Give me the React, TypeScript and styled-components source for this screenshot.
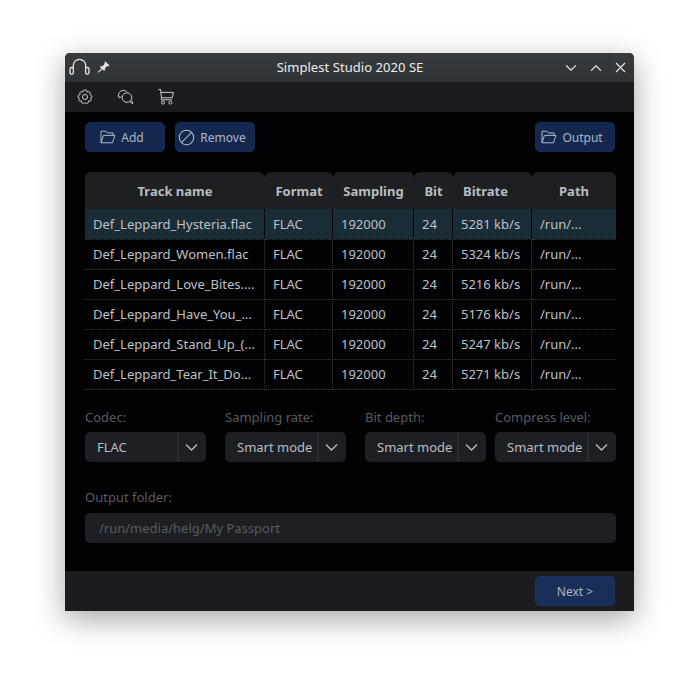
import React from "react";
import styled, { createGlobalStyle } from "styled-components";

const Global = createGlobalStyle`
  html, body { margin: 0; padding: 0; background: #fff; }
  body { font-family: "Noto Sans", "Open Sans", sans-serif; font-size: 13px; }
  * { box-sizing: border-box; }
`;

const Page = styled.div`
  width: 699px;
  height: 688px;
  padding: 53px 65px 0;
  overflow: hidden;
`;

const Window = styled.div`
  width: 569px;
  height: 558px;
  display: flex;
  flex-direction: column;
  background: #020204;
  border-radius: 5px 5px 0 0;
  box-shadow: 0 8px 30px rgba(0, 0, 0, 0.36);
  overflow: hidden;
`;

const TitleBar = styled.div`
  height: 29px;
  flex: none;
  display: flex;
  align-items: center;
  position: relative;
  padding: 0 8px 0 4px;
  background: linear-gradient(#383c3f, #2e3235);
  color: #eceded;
`;

const TitleText = styled.div`
  position: absolute;
  left: 0;
  right: 0;
  text-align: center;
  font-size: 13px;
  line-height: 29px;
  letter-spacing: 0.05px;
  margin-left: 1px;
`;

const TitleLeft = styled.div`
  display: flex;
  align-items: center;
  gap: 7px;
  padding-bottom: 2px;
`;

const TitleRight = styled.div`
  margin-left: auto;
  display: flex;
  align-items: center;
  gap: 13px;
`;

const ToolBar = styled.div`
  height: 30px;
  flex: none;
  display: flex;
  align-items: center;
  gap: 24px;
  padding-left: 12px;
  background: #1a1c1f;
  color: #c8cacd;
`;

const Content = styled.div`
  flex: 1;
  display: flex;
  flex-direction: column;
  padding: 10px 18px 0 20px;
`;

const ButtonRow = styled.div`
  display: flex;
  gap: 10px;
  height: 30px;
  padding-right: 1px;
`;

const BlueButton = styled.div<{ $push?: boolean }>`
  width: 80px;
  height: 30px;
  display: flex;
  align-items: center;
  justify-content: center;
  gap: 5px;
  padding-right: 6px;
  border-radius: 5px;
  background: #14284f;
  border: 1px solid #182c54;
  color: #aeb6c4;
  font-size: 12px;
  ${(p) => (p.$push ? "margin-left: auto;" : "")}
`;

const Table = styled.div`
  margin-top: 20px;
  width: 531px;
  display: grid;
  grid-template-columns: 180px 68px 81px 39px 79px 84px;
  grid-auto-rows: 30px;
`;

const HeaderCell = styled.div<{ $start?: boolean }>`
  height: 37px;
  margin-bottom: -7px;
  display: flex;
  align-items: center;
  justify-content: ${(p) => (p.$start ? "flex-start" : "center")};
  padding-left: ${(p) => (p.$start ? "10px" : "0")};
  background: #1d1f23;
  border-radius: 6px 6px 0 0;
  color: #b9bcc1;
  font-weight: 700;
  font-size: 13px;
`;

const HeaderRow = styled.div`
  display: contents;
`;

const Row = styled.div`
  display: contents;
`;

const Cell = styled.div<{ $selected?: boolean; $last?: boolean }>`
  height: 31px;
  margin-top: 7px;
  margin-bottom: -8px;
  display: flex;
  align-items: center;
  padding-left: 8px;
  white-space: nowrap;
  overflow: hidden;
  color: #bfc1c5;
  font-size: 13px;
  background: ${(p) => (p.$selected ? "#1a2c38" : "transparent")};
  background-clip: padding-box;
  border-bottom: 1px dotted #37393d;
  border-right: ${(p) =>
    p.$last ? "none" : p.$selected ? "1px dotted #05090c" : "1px dotted #37393d"};
`;

const Settings = styled.div`
  display: grid;
  width: 531px;
  margin-top: 26px;
  grid-template-columns: 140px 140px 130px 121px;
`;

const Field = styled.div`
  display: flex;
  flex-direction: column;
`;

const Label = styled.div`
  color: #585b5f;
  font-size: 13px;
  line-height: 18px;
  height: 24px;
`;

const Combo = styled.div`
  width: 121px;
  height: 30px;
  display: flex;
  align-items: center;
  background: #1d1f24;
  border-radius: 5px;
  color: #bbbdc1;
  font-size: 13px;
`;

const ComboText = styled.div`
  flex: 1;
  padding-left: 12px;
  white-space: nowrap;
`;

const ComboArrow = styled.div`
  width: 29px;
  height: 28px;
  flex: none;
  display: flex;
  align-items: center;
  justify-content: center;
  padding-right: 3px;
  border-left: 2px solid #282b32;
`;

const OutputLabel = styled(Label)`
  margin-top: 26px;
  height: 25px;
`;

const OutputInput = styled.div`
  width: 531px;
  height: 30px;
  display: flex;
  align-items: center;
  padding-left: 14px;
  background: #1d1f24;
  border-radius: 5px;
  color: #585b5f;
  font-size: 13px;
`;

const Footer = styled.div`
  height: 40px;
  flex: none;
  display: flex;
  align-items: center;
  justify-content: flex-end;
  padding-right: 19px;
  background: #1a1c1f;
`;

const NextButton = styled(BlueButton)`
  padding-right: 0;
  background: #183059;
  border-color: #1b335d;
`;

const tracks = [
  ["Def_Leppard_Hysteria.flac", "5281 kb/s"],
  ["Def_Leppard_Women.flac", "5324 kb/s"],
  ["Def_Leppard_Love_Bites....", "5216 kb/s"],
  ["Def_Leppard_Have_You_...", "5176 kb/s"],
  ["Def_Leppard_Stand_Up_(...", "5247 kb/s"],
  ["Def_Leppard_Tear_It_Do...", "5271 kb/s"],
];

const headers = ["Track name", "Format", "Sampling", "Bit", "Bitrate", "Path"];

const Headphones = () => (
  <svg width="21" height="17" viewBox="0 0 21 17" fill="none" stroke="#e6e7e8" strokeWidth="1.3">
    <path d="M4.3 10V7.5a6.2 6.2 0 0 1 12.4 0V10" />
    <rect x="1" y="9.5" width="3.4" height="6.8" rx="1.7" />
    <rect x="16.6" y="9.5" width="3.4" height="6.8" rx="1.7" />
  </svg>
);

const Pin = () => (
  <svg width="13" height="12" viewBox="0 0 13 12" fill="#e6e7e8" stroke="#e6e7e8" strokeWidth="0.5">
    <path d="M8.2 0.8 12.2 4.3 10.8 5.2 10 4.8 7.8 7.2 7.8 9 7 9.6 3.2 6.2 3.8 5.4 5.8 5.2 8 2.8 7.6 2Z" />
    <path d="M4.8 8 1 11.4" fill="none" strokeWidth="1.2" />
  </svg>
);

const Chevron = ({ up, size = 12, color = "#eceded" }: { up?: boolean; size?: number; color?: string }) => (
  <svg width={size} height={Math.round(size * 0.7)} viewBox="0 0 13 9" fill="none" stroke={color} strokeWidth="1.3">
    <path d={up ? "M1 7.5 6.5 2 12 7.5" : "M1 1.5 6.5 7 12 1.5"} />
  </svg>
);

const Close = () => (
  <svg width="11" height="11" viewBox="0 0 11 11" fill="none" stroke="#e8e9ea" strokeWidth="1.1">
    <path d="M1 1 10 10M10 1 1 10" />
  </svg>
);

const Gear = () => (
  <svg width="16" height="16" viewBox="0 0 24 24" fill="none" stroke="currentColor" strokeWidth="1.5" strokeLinejoin="round">
    <path d="M12 1.2 14.6 2 15.2 4.6 17.8 3.9 20 5.8 19.3 8.2 21.9 9.4 22.6 12 20.2 13.6 21.6 16 20 18.2 17.4 17.8 16.8 20.6 14.4 22 12 20.3 9.6 22 7.2 20.6 6.6 17.8 4 18.2 2.4 16 3.8 13.6 1.4 12 2.1 9.4 4.7 8.2 4 5.8 6.2 3.9 8.8 4.6 9.4 2Z" />
    <circle cx="12" cy="12" r="3.8" />
  </svg>
);

const Bubbles = () => (
  <svg width="17" height="16" viewBox="0 0 17 16" fill="none" stroke="currentColor" strokeWidth="1">
    <path d="M2.4 8.6C1 6.6 1.4 3.8 3.5 2.3 5.5 0.9 8.2 1.1 9.8 2.6" />
    <path d="M0.8 6.4 2.4 8.8 4.8 7.6" strokeWidth="0.9" />
    <circle cx="10" cy="8.6" r="4.8" />
    <path d="M12.6 12.6 15.8 14.8 14.6 11.4" />
  </svg>
);

const Cart = () => (
  <svg width="16" height="16" viewBox="0 0 16 16" fill="none" stroke="currentColor" strokeWidth="1">
    <path d="M0.5 0.6H2.6L3.6 10.8H14" />
    <path d="M3 3.4H15.4L14.2 8.8H3.4" />
    <circle cx="5" cy="13.6" r="1.5" />
    <circle cx="12.4" cy="13.6" r="1.5" />
  </svg>
);

const Folder = () => (
  <svg width="16" height="14" viewBox="0 0 16 14" fill="none" stroke="#aeb6c4" strokeWidth="1">
    <path d="M1 12.8V1.2H6L7.4 3H13V5.4" />
    <path d="M1 12.8H12.4L15 5.4H3.4Z" />
  </svg>
);

const Ban = () => (
  <svg width="17" height="17" viewBox="0 0 17 17" fill="none" stroke="#aeb6c4" strokeWidth="1.1">
    <circle cx="8.5" cy="8.5" r="7.2" />
    <path d="M3.4 13.6 13.6 3.4" />
  </svg>
);

export default function App() {
  return (
    <Page>
      <Global />
      <Window>
        <TitleBar>
          <TitleLeft>
            <Headphones />
            <Pin />
          </TitleLeft>
          <TitleText>Simplest Studio 2020 SE</TitleText>
          <TitleRight>
            <Chevron />
            <Chevron up />
            <Close />
          </TitleRight>
        </TitleBar>
        <ToolBar>
          <Gear />
          <Bubbles />
          <Cart />
        </ToolBar>
        <Content>
          <ButtonRow>
            <BlueButton>
              <Folder />
              Add
            </BlueButton>
            <BlueButton>
              <Ban />
              Remove
            </BlueButton>
            <BlueButton $push>
              <Folder />
              Output
            </BlueButton>
          </ButtonRow>
          <Table>
            <HeaderRow>
              {headers.map((h) => (
                <HeaderCell key={h} $start={h === "Bitrate"}>
                  {h}
                </HeaderCell>
              ))}
            </HeaderRow>
            {tracks.map(([name, rate], i) => (
              <Row key={name}>
                <Cell $selected={i === 0}>{name}</Cell>
                <Cell $selected={i === 0}>FLAC</Cell>
                <Cell $selected={i === 0}>192000</Cell>
                <Cell $selected={i === 0}>24</Cell>
                <Cell $selected={i === 0}>{rate}</Cell>
                <Cell $selected={i === 0} $last>
                  /run/...
                </Cell>
              </Row>
            ))}
          </Table>
          <Settings>
            {[
              ["Codec:", "FLAC"],
              ["Sampling rate:", "Smart mode"],
              ["Bit depth:", "Smart mode"],
              ["Compress level:", "Smart mode"],
            ].map(([label, value]) => (
              <Field key={label}>
                <Label>{label}</Label>
                <Combo>
                  <ComboText>{value}</ComboText>
                  <ComboArrow>
                    <Chevron size={13} color="#bfc1c5" />
                  </ComboArrow>
                </Combo>
              </Field>
            ))}
          </Settings>
          <OutputLabel>Output folder:</OutputLabel>
          <OutputInput>/run/media/helg/My Passport</OutputInput>
        </Content>
        <Footer>
          <NextButton>Next &gt;</NextButton>
        </Footer>
      </Window>
    </Page>
  );
}
